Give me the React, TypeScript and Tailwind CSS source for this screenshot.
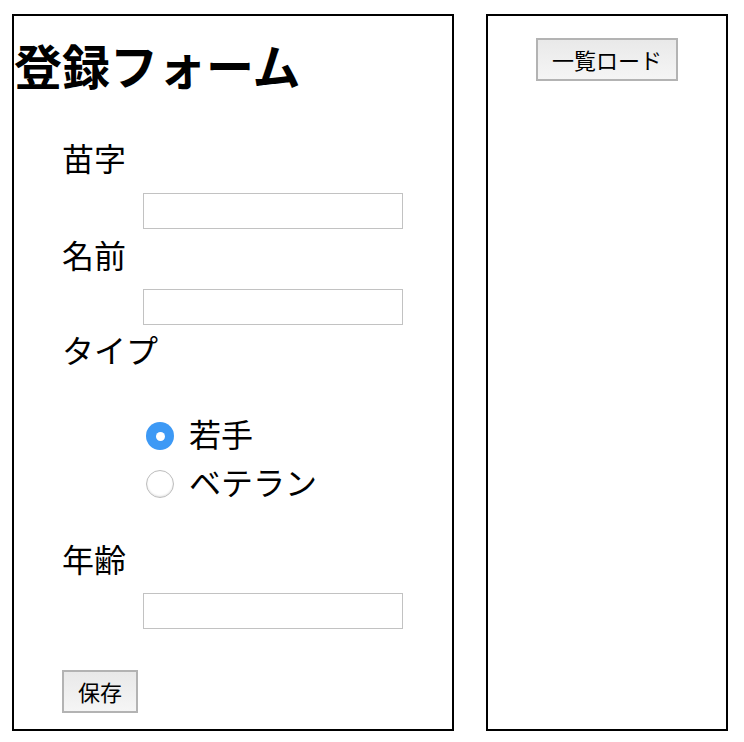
const FONT = "font-['Hiragino_Sans','Noto_Sans_CJK_JP',sans-serif]";

function Label({ text, className }: { text: string; className: string }) {
  return <div className={`ml-[48px] text-[32px] leading-[32px] ${className}`}>{text}</div>;
}

function TextInput({ className }: { className: string }) {
  return (
    <input
      type="text"
      className={`ml-[129px] block w-[260px] h-[36px] border border-[#c2c2c2] bg-white outline-none px-2 text-[16px] ${className}`}
    />
  );
}

function Radio({ checked, label }: { checked: boolean; label: string }) {
  return (
    <label className="flex items-center h-[48px] ml-[132px] gap-[15px] cursor-pointer">
      {checked ? (
        <span className="w-[28px] h-[28px] rounded-full bg-[#3d99f5] flex items-center justify-center">
          <span className="w-[9px] h-[9px] rounded-full bg-white" />
        </span>
      ) : (
        <span className="w-[28px] h-[28px] rounded-full bg-white border border-[#bdbdbd] shadow-[inset_0_-1px_2px_rgba(0,0,0,0.12)]" />
      )}
      <span className="text-[32px] leading-[32px] mb-[7px]">{label}</span>
    </label>
  );
}

function GrayButton({ text, className }: { text: string; className: string }) {
  return (
    <button
      className={`h-[43px] pb-[2px] border-2 border-[#b3b3b3] bg-gradient-to-b from-[#e9e9e9] to-[#f5f5f5] text-[22px] leading-[22px] text-black ${className}`}
    >
      {text}
    </button>
  );
}

export default function App() {
  return (
    <div className={`flex items-start pl-[12px] pt-[14px] gap-[32px] bg-white text-black ${FONT}`}>
      <div className="w-[442px] h-[717px] border-2 border-black flex flex-col">
        <h1 className="mt-[24px] text-[48px] leading-[48px] font-bold whitespace-nowrap">登録フォーム</h1>
        <Label text="苗字" className="mt-[53px]" />
        <TextInput className="mt-[20px]" />
        <Label text="名前" className="mt-[9px]" />
        <TextInput className="mt-[19px]" />
        <Label text="タイプ" className="mt-[8px]" />
        <div className="mt-[47px] flex flex-col">
          <Radio checked label="若手" />
          <Radio checked={false} label="ベテラン" />
        </div>
        <Label text="年齢" className="mt-[34px]" />
        <TextInput className="mt-[19px]" />
        <div className="mt-[41px] ml-[48px]">
          <GrayButton text="保存" className="w-[76px]" />
        </div>
      </div>
      <div className="w-[242px] h-[717px] border-2 border-black flex flex-col items-center">
        <GrayButton text="一覧ロード" className="mt-[22px] w-[142px]" />
      </div>
    </div>
  );
}
